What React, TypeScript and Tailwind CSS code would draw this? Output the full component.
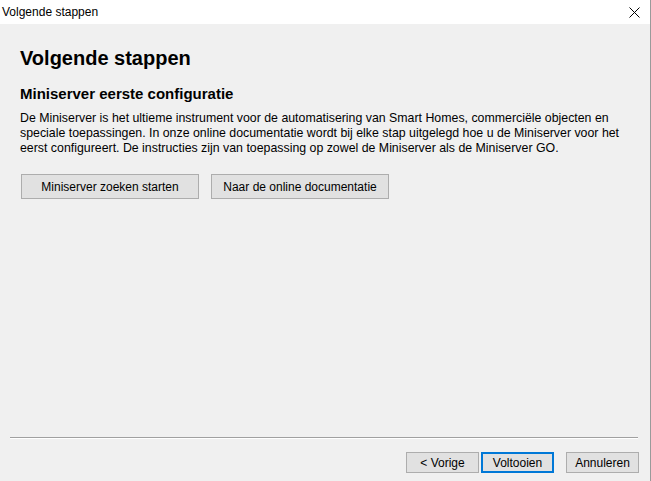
export default function App() {
  const font = { fontFamily: '"Liberation Sans", Arial, sans-serif' };
  return (
    <div className="w-[651px] h-[481px] flex flex-col bg-[#f0f0f0] border-r border-[#9a9a9a] text-black overflow-hidden" style={font}>
      <div className="h-[24px] bg-white flex items-center justify-between shrink-0">
        <span className="pl-[2px] text-[12px] leading-none">Volgende stappen</span>
        <svg width="11" height="11" viewBox="0 0 11 11" className="mr-[10px]">
          <path d="M0.5 0.5 L10.5 10.5 M10.5 0.5 L0.5 10.5" stroke="#000" strokeWidth="1" />
        </svg>
      </div>
      <div className="flex-1 flex flex-col pl-[20px]">
        <h1 className="mt-[22px] text-[20px] font-bold leading-[24px]">Volgende stappen</h1>
        <h2 className="mt-[15px] text-[15px] font-bold leading-[18px]">Miniserver eerste configuratie</h2>
        <p className="mt-[8px] text-[12.35px] leading-[15px]">
          De Miniserver is het ultieme instrument voor de automatisering van Smart Homes, commerciële objecten en
          <br />
          speciale toepassingen. In onze online documentatie wordt bij elke stap uitgelegd hoe u de Miniserver voor het
          <br />
          eerst configureert. De instructies zijn van toepassing op zowel de Miniserver als de Miniserver GO.
        </p>
        <div className="mt-[18px] flex gap-[12px] pl-[1px]">
          <button className="w-[178px] h-[25px] bg-[#e1e1e1] border border-[#adadad] text-[12px]">Miniserver zoeken starten</button>
          <button className="w-[178px] h-[25px] bg-[#e1e1e1] border border-[#adadad] text-[12px]">Naar de online documentatie</button>
        </div>
      </div>
      <div className="mx-[10px] mr-[12px] border-t border-[#a0a0a0] border-b border-b-white shrink-0" />
      <div className="h-[42px] flex items-start justify-end gap-[2px] pr-[11px] pt-[13px] shrink-0">
        <button className="w-[73px] h-[21px] bg-[#e1e1e1] border border-[#adadad] text-[12px]">&lt; Vorige</button>
        <button className="w-[73px] h-[21px] bg-[#e1e1e1] border-2 border-[#0078d7] text-[12px]">Voltooien</button>
        <button className="ml-[10px] w-[73px] h-[21px] bg-[#e1e1e1] border border-[#adadad] text-[12px]">Annuleren</button>
      </div>
    </div>
  );
}
